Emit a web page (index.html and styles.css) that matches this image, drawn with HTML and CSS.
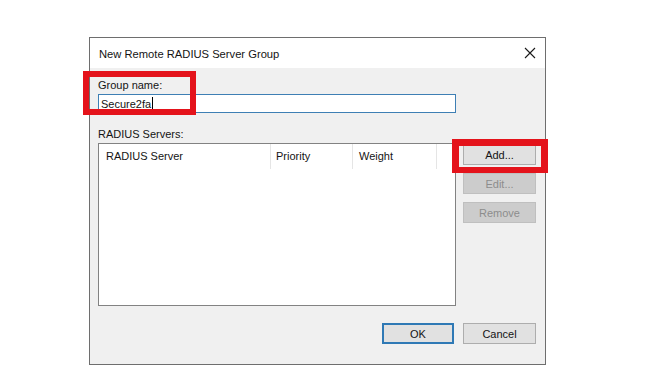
FILE: index.html
```html
<!DOCTYPE html>
<html>
<head>
<meta charset="utf-8">
<link rel="stylesheet" href="styles.css">
</head>
<body>
<div class="dialog">
  <div class="titlebar">
    <span class="title">New Remote RADIUS Server Group</span>
    <svg class="close" width="12" height="12" viewBox="0 0 12 12"><path d="M1 1 L11 11 M11 1 L1 11" stroke="#1a1a1a" stroke-width="1.1" fill="none"/></svg>
  </div>
  <div class="content">
    <div class="label">Group name:</div>
    <div class="input"><span>Secure2fa</span><span class="caret"></span></div>
    <div class="label label-servers">RADIUS Servers:</div>
    <div class="row">
      <div class="listbox">
        <div class="header">
          <div class="col col-server">RADIUS Server</div>
          <div class="col col-priority">Priority</div>
          <div class="col col-weight">Weight</div>
        </div>
      </div>
      <div class="side">
        <div class="btn">Add...</div>
        <div class="btn disabled">Edit...</div>
        <div class="btn disabled">Remove</div>
      </div>
    </div>
    <div class="footer">
      <div class="btn btn-ok">OK</div>
      <div class="btn btn-cancel">Cancel</div>
    </div>
  </div>
</div>
<div class="mark mark-group"></div>
<div class="mark mark-add"></div>
</body>
</html>
```
FILE: styles.css
```css
html, body {
  margin: 0;
  padding: 0;
  background: #ffffff;
}
body {
  font-family: "Liberation Sans", Arial, sans-serif;
  font-size: 11px;
  color: #141414;
  position: relative;
  width: 666px;
  height: 392px;
  overflow: hidden;
}
.dialog {
  margin-left: 89px;
  margin-top: 37px;
  width: 455px;
  height: 326px;
  border: 1px solid #6e6e6e;
  background: #f0f0f0;
  display: flex;
  flex-direction: column;
}
.titlebar {
  height: 30px;
  background: #ffffff;
  display: flex;
  align-items: center;
  justify-content: space-between;
  padding-left: 9px;
  padding-right: 9px;
  flex-shrink: 0;
}
.title {
  font-size: 11.2px;
  padding-top: 1px;
}
.content {
  padding: 9px 9px 0 8px;
  display: flex;
  flex-direction: column;
}
.label {
  line-height: 16px;
  height: 16px;
}
.input {
  margin-top: 1px;
  height: 17px;
  border: 1px solid #3e7fb4;
  background: #ffffff;
  display: flex;
  align-items: center;
  padding-left: 2px;
  box-sizing: content-box;
  width: 354px;
}
.caret {
  display: inline-block;
  width: 1px;
  height: 13px;
  background: #000;
  margin-left: 1px;
}
.label-servers {
  margin-top: 13px;
}
.row {
  display: flex;
  margin-top: 1px;
}
.listbox {
  width: 356px;
  height: 161px;
  border: 1px solid #828282;
  background: #ffffff;
}
.header {
  display: flex;
  height: 25px;
}
.col {
  display: flex;
  align-items: center;
  padding-left: 7px;
  box-sizing: border-box;
  border-right: 1px solid #e5e5e5;
  padding-bottom: 1px;
}
.col-server { width: 172px; }
.col-priority { width: 82px; padding-left: 5px; }
.col-weight { width: 84px; padding-left: 6px; }
.side {
  margin-left: 7px;
  padding-top: 1px;
  display: flex;
  flex-direction: column;
  gap: 8px;
}
.btn {
  width: 73px;
  height: 21px;
  box-sizing: border-box;
  border: 1px solid #adadad;
  background: #e1e1e1;
  display: flex;
  align-items: center;
  justify-content: center;
}
.btn.disabled {
  background: #cccccc;
  border-color: #bfbfbf;
  color: #8c8c8c;
}
.footer {
  display: flex;
  justify-content: flex-end;
  gap: 9px;
  margin-top: 17px;
}
.btn-ok {
  width: 72px;
  border: 2px solid #2f79b5;
}
.mark {
  position: absolute;
  border: 6px solid #e4131b;
  box-sizing: border-box;
}
.mark-group {
  left: 83px;
  top: 71px;
  width: 113px;
  height: 44px;
}
.mark-add {
  left: 452px;
  top: 139px;
  width: 96px;
  height: 34px;
  border-width: 7px 7px 6px 7px;
}
```
